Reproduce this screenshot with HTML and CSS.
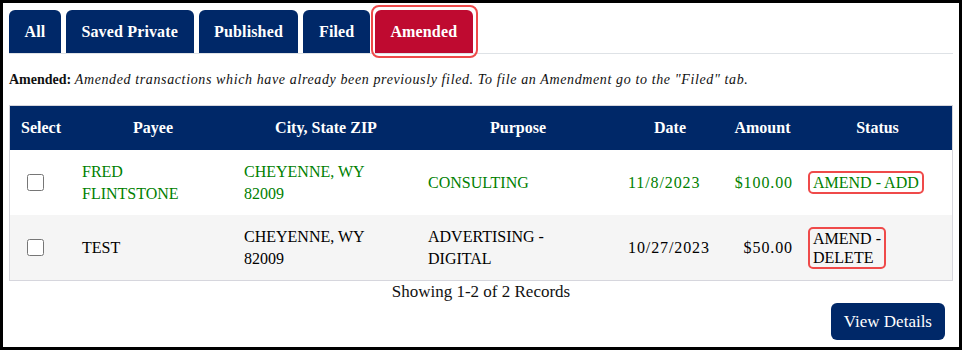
FILE: index.html
```html
<!DOCTYPE html>
<html lang="en">
<head>
  <meta charset="UTF-8">
  <meta name="viewport" content="width=device-width, initial-scale=1.0">
  <title>Transactions - Amended</title>
  <link rel="stylesheet" href="styles.css">
</head>
<body>

<div class="frame">
  <!-- tabs -->
  <div class="tabs">
    <button class="tab">All</button>
    <button class="tab">Saved Private</button>
    <button class="tab">Published</button>
    <button class="tab">Filed</button>
    <button class="tab is-active">Amended</button>
  </div>

  <p class="tab-note"><b>Amended:</b> <i>Amended transactions which have already been previously filed. To file an Amendment go to the "Filed" tab.</i></p>

  <table class="records">
    <colgroup>
      <col class="col-select">
      <col class="col-payee">
      <col class="col-city">
      <col class="col-purpose">
      <col class="col-date">
      <col class="col-amount">
      <col class="col-status">
    </colgroup>
    <thead>
      <tr>
        <th>Select</th>
        <th>Payee</th>
        <th>City, State ZIP</th>
        <th>Purpose</th>
        <th>Date</th>
        <th>Amount</th>
        <th>Status</th>
      </tr>
    </thead>
    <tbody>
      <tr class="row-add">
        <td class="cell-select"><input type="checkbox"></td>
        <td>FRED FLINTSTONE</td>
        <td>CHEYENNE, WY 82009</td>
        <td>CONSULTING</td>
        <td class="cell-num">11/8/2023</td>
        <td class="cell-num cell-amount">$100.00</td>
        <td class="cell-status"><span class="status-tag">AMEND - ADD</span></td>
      </tr>
      <tr class="row-delete">
        <td class="cell-select"><input type="checkbox"></td>
        <td>TEST</td>
        <td>CHEYENNE, WY 82009</td>
        <td>ADVERTISING - DIGITAL</td>
        <td class="cell-num">10/27/2023</td>
        <td class="cell-num cell-amount">$50.00</td>
        <td class="cell-status"><span class="status-tag status-tag--wrap">AMEND&nbsp;- DELETE</span></td>
      </tr>
    </tbody>
  </table>

  <div class="records-count">Showing 1-2 of 2 Records</div>

  <div class="actions">
    <button class="btn-details">View Details</button>
  </div>
</div>

</body>
</html>
```

FILE: styles.css
```css
body {
  margin: 0;
  font-family: "Liberation Serif", "Times New Roman", serif;
  color: #111;
}
/* outer frame of the panel */
.frame {
  height: 350px;
  box-sizing: border-box;
  border: 3px solid #000;
  padding: 7px 6px;
}
/* tabs row */
.tabs {
  display: flex;
  gap: 5px;
  border-bottom: 1px solid #dee2e6;
}
.tab {
  position: relative;
  height: 43px;
  padding: 0 15.5px;
  border: none;
  border-radius: 6px 6px 0 0;
  background: #002868;
  color: #fff;
  font-family: inherit;
  font-size: 16px;
  font-weight: bold;
  letter-spacing: 0.15px;
  cursor: pointer;
}
.tab.is-active {
  background: #bf0a30;
}
/* focus ring around the active tab */
.tab.is-active::after {
  content: "";
  position: absolute;
  top: -5px;
  right: -5px;
  bottom: -5px;
  left: -4px;
  border: 2px solid #ef4a4a;
  border-radius: 8px;
}
.tab-note {
  margin: 16px 0 15px;
  font-size: 14px;
  line-height: 20px;
}
.tab-note i {
  letter-spacing: 0.62px;
}
/* table */
.records {
  width: 100%;
  table-layout: fixed;
  border-collapse: separate;
  border-spacing: 0;
  border: 1px solid #d6d6dd;
  font-size: 16px;
}
.col-select { width: 62px; }
.col-payee { width: 162px; }
.col-city { width: 184px; }
.col-purpose { width: 200px; }
.col-date { width: 104px; }
.col-amount { width: 81px; }
.col-status { width: 149px; }

.records th {
  height: 44px;
  padding: 0 10px;
  background: #002868;
  color: #fff;
  font-weight: bold;
  text-align: center;
}
.records td {
  height: 65px;
  box-sizing: border-box;
  padding: 10px 12px 10px 10px;
  line-height: 22px;
  text-align: left;
  vertical-align: middle;
}
.row-add td {
  color: #008000;
}
.row-delete td {
  background: #f5f5f5;
  color: #000;
}
.cell-select {
  padding-left: 17px !important;
}
.cell-select input {
  width: 17px;
  height: 17px;
  margin: 0;
  display: block;
}
/* dates and amounts run a little wider in the original font */
.records td.cell-num {
  letter-spacing: 0.9px;
  padding-right: 8px;
}
.records td.cell-amount {
  text-align: right;
  padding-right: 10px;
}
.records td.cell-status {
  padding-left: 5px;
}
.status-tag {
  display: inline-block;
  padding: 0 3px;
  border: 2px solid #ef4a4a;
  border-radius: 5px;
  line-height: 19px;
}
.status-tag--wrap {
  width: min-content;
}
.records-count {
  text-align: center;
  font-size: 17px;
  line-height: 22px;
}
.actions {
  display: flex;
  justify-content: flex-end;
  padding-right: 8px;
}
.btn-details {
  height: 37px;
  padding: 0 13px;
  border: none;
  border-radius: 6px;
  background: #002868;
  color: #fff;
  font-family: inherit;
  font-size: 17px;
  cursor: pointer;
}
```
